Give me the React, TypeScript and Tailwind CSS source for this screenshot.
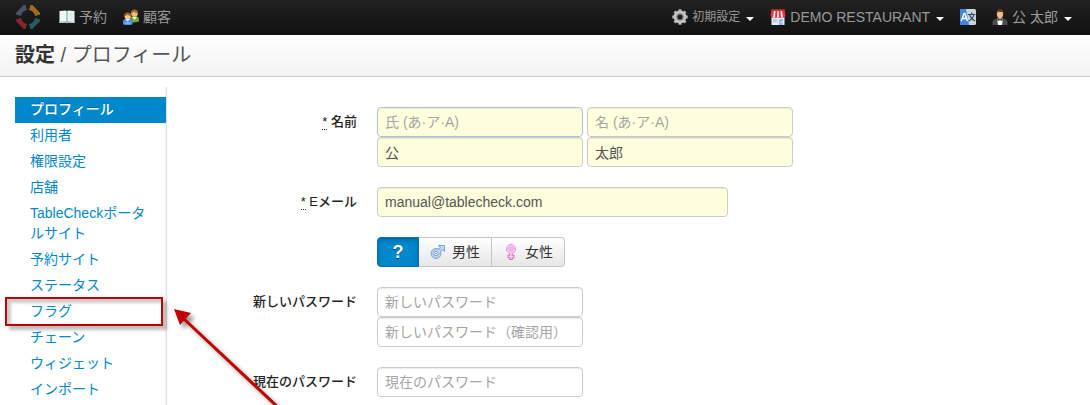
import React, { useState } from 'react';
import clsx from 'clsx';

const menuItems = [
  'プロフィール',
  '利用者',
  '権限設定',
  '店舗',
  'TableCheckポータルサイト',
  '予約サイト',
  'ステータス',
  'フラグ',
  'チェーン',
  'ウィジェット',
  'インポート',
];

const LogoIcon = () => (
  <svg width="26" height="26" viewBox="0 0 26 26" aria-hidden="true">
    <path d="M1 9L8.500 1H10.500L12 6A7.500 7.500 0 0 0 6 12L1 10.500Z" fill="#47536b" />
    <path d="M25 9L17.500 1H15.500L14 6A7.500 7.500 0 0 1 20 12L25 10.500Z" fill="#a36a26" />
    <path d="M1 17L8.500 25H10.500L12 20A7.500 7.500 0 0 1 6 14L1 15.500Z" fill="#85262b" />
    <path d="M25 17L17.500 25H15.500L14 20A7.500 7.500 0 0 0 20 14L25 15.500Z" fill="#245c66" />
  </svg>
);

const BookIcon = () => (
  <svg width="16" height="16" viewBox="0 0 16 16" aria-hidden="true">
    <path d="M.5 2L7 1.500L8 2.500L9 1.500L15.500 2V14L9 13.500L8 14.500L7 13.500L.5 14Z" fill="#eef8f8" />
    <path d="M.5 12.500L7.500 12V13.500L.5 14Z" fill="#b5cccd" />
    <path d="M15.500 12.500L8.500 12V13.500L15.500 14Z" fill="#b5cccd" />
    <path d="M7.500 2.500H8.500V14H7.500Z" fill="#76999c" />
    <path d="M10 3.500H14V11.500H10Z" fill="#d9eeee" />
  </svg>
);

const PeopleIcon = () => (
  <svg width="16" height="16" viewBox="0 0 16 16" aria-hidden="true">
    <path d="M7 14V9.500Q8 7 11.500 7Q15.500 7 16 10V12.500L14 13Z" fill="#75a832" />
    <path d="M9 8L11.500 11L14 8Z" fill="#e7f3cf" />
    <circle cx="11.500" cy="4.500" r="3.300" fill="#f1bd7b" />
    <path d="M8 4.500Q8 .5 11.500 .5Q15 .5 15 4.500Q12 4 11 2.500Q9.500 4 8 4.500Z" fill="#a06a2c" />
    <path d="M0 15V12Q.5 9.500 4.500 9.500Q9 9.500 9.500 12V15L8 16H1.500Z" fill="#4c8de0" />
    <path d="M2 13.500H7.500V14.500H2Z" fill="#a9cdf8" />
    <path d="M2.500 10L4.500 12.500L7 10Z" fill="#eef5ff" />
    <circle cx="4.700" cy="7" r="3.200" fill="#f6c889" />
    <path d="M1.300 7Q1.300 3.500 4.700 3.500Q8 3.500 8 7Q5.500 6.500 4.500 5.500Q3 7 1.300 7Z" fill="#96601f" />
  </svg>
);

const GearIcon = () => (
  <svg width="16" height="16" viewBox="0 0 16 16" aria-hidden="true">
    <g fill="#b9b9b9">
      <path d="M6.500 .3H9.500V15.700H6.500Z" />
      <path d="M.3 6.500H15.700V9.500H.3Z" />
      <path d="M6.500 .3H9.500V15.700H6.500Z" transform="rotate(45 8 8)" />
      <path d="M.3 6.500H15.700V9.500H.3Z" transform="rotate(45 8 8)" />
    </g>
    <circle cx="8" cy="8" r="6.400" fill="#c4c4c4" />
    <circle cx="8" cy="8" r="3.800" fill="#8b8b8b" />
    <circle cx="8" cy="8" r="2.500" fill="#202020" />
  </svg>
);

const ShopIcon = () => (
  <svg width="16" height="16" viewBox="0 0 16 16" aria-hidden="true">
    <path d="M1.500 8H14.500V16H1.500Z" fill="#e6eef7" />
    <path d="M3 10H7.500V14H3Z" fill="#a5c9ee" />
    <path d="M9 10H13V16H9Z" fill="#8fb9e6" />
    <path d="M4 13L7 10V14H4ZM10 14L13 11V14Z" fill="#c5ddf5" />
    <path d="M1.500 .5H14.500L15.500 7Q14.500 9.500 12.500 8.500Q11 9.500 9.500 8.500Q8 9.500 6.500 8.500Q5 9.500 3.500 8.500Q1.500 9.500 .5 7Z" fill="#e03a3e" />
    <path d="M4 2H5.500L5 8.500H3ZM7.300 2H8.700L9 8.500H7ZM10.500 2H12L13 8.500H11Z" fill="#ffe9e9" />
    <path d="M1.500 .5H14.500V2H1.500Z" fill="#cc2c35" />
  </svg>
);

const TranslateIcon = () => (
  <svg width="16" height="16" viewBox="0 0 16 16" aria-hidden="true">
    <rect width="16" height="16" rx="1.500" fill="#c8d3dc" />
    <path d="M1.500 0H6L9 16H1.500Q0 16 0 14.500V1.500Q0 0 1.500 0Z" fill="#3b86e8" />
    <path d="M1.300 12L4 4.500H4.800L7.500 12M2.500 9.500H6.500" fill="none" stroke="#fff" strokeWidth="1.500" />
    <path d="M8 5.500H15.300M11.700 3.500V5.500M8.500 12Q13 10 13.800 5.500M9.500 6Q11 10 15 12" fill="none" stroke="#34495e" strokeWidth="1.200" />
  </svg>
);

const WaiterIcon = () => (
  <svg width="16" height="16" viewBox="0 0 16 16" aria-hidden="true">
    <path d="M.5 16V13Q1 10 5 9.500H11Q15 10 15.500 13V16Z" fill="#4b4b4b" />
    <path d="M5 9.500H11L10 16H6Z" fill="#fff" />
    <path d="M5.500 9.500L8 10.500L10.500 9.500V12L8 11L5.500 12Z" fill="#161616" />
    <ellipse cx="8" cy="5.200" rx="3.100" ry="4" fill="#f0be88" />
    <path d="M4.500 5Q4 0 8 0Q12 0 11.500 5L10.500 3Q7.500 3 6 2.500Z" fill="#60391c" />
  </svg>
);

const MaleIcon = () => (
  <svg width="16" height="16" viewBox="0 0 16 16" fill="none" aria-hidden="true">
    <path d="M8.500 7.500L12 4" stroke="#7da3d8" strokeWidth="4" />
    <path d="M8.500 1.500H14.500V7.500Z" fill="#c2d8f4" stroke="#7da3d8" />
    <circle cx="6" cy="9.500" r="5" fill="#b8d1f1" stroke="#7da3d8" />
    <path d="M8.500 7.500L12.500 3.500" stroke="#c2d8f4" strokeWidth="2" />
    <circle cx="6" cy="9.500" r="2.200" fill="#eef4fc" stroke="#7da3d8" />
    <circle cx="6" cy="9.500" r=".8" fill="#5f89c4" />
  </svg>
);

const FemaleIcon = () => (
  <svg width="16" height="16" viewBox="0 0 16 16" fill="none" aria-hidden="true">
    <path d="M8 9V16M4.500 12.500H11.500" stroke="#d574c4" strokeWidth="3.500" />
    <circle cx="8" cy="5" r="4.500" fill="#f6cdef" stroke="#e196d6" />
    <path d="M8 9V15M5.500 12.500H10.500" stroke="#f6cdef" strokeWidth="1.500" />
    <circle cx="8" cy="5" r="2" fill="#fdf0fb" stroke="#e196d6" />
    <circle cx="8" cy="5" r=".8" fill="#d574c4" />
  </svg>
);

const Caret = () => (
  <span className="mt-1 h-0 w-0 border-x-4 border-t-4 border-x-transparent border-t-white" />
);

const inputBase =
  'h-[30px] rounded border px-[7px] pb-px text-sm text-[#555] shadow-[inset_0_1px_1px_rgba(0,0,0,0.075)] outline-none placeholder:text-[#a5a5a5]';

const Input: React.FC<React.InputHTMLAttributes<HTMLInputElement> & { required?: boolean; focused?: boolean; wide?: boolean }> = ({
  required,
  focused,
  wide,
  ...props
}) => (
  <input
    {...props}
    className={clsx(
      inputBase,
      required ? 'bg-[#ffffdd]' : 'bg-white',
      focused ? 'border-[#a9c4dc]' : 'border-[#ccc]',
      wide ? 'w-[351px]' : 'w-[206px]'
    )}
  />
);

const Field: React.FC<{ label?: string; htmlFor?: string; required?: boolean; children: React.ReactNode }> = ({
  label,
  htmlFor,
  required,
  children,
}) => (
  <div className="flex gap-5">
    <div className="w-[190px] shrink-0 pt-[5px] text-right text-[13px] leading-5">
      {label && (
        <label htmlFor={htmlFor} className="font-medium text-[#222]">
          {required && (
            <>
              <abbr title="必須" className="border-b border-dotted border-[#333] font-normal no-underline">*</abbr>{' '}
            </>
          )}
          {label}
        </label>
      )}
    </div>
    <div>{children}</div>
  </div>
);

const Navbar = () => (
  <nav className="flex h-[35px] items-center justify-between bg-gradient-to-b from-[#222] to-[#111] pr-[18px] pb-[2px] pl-[15px] text-sm text-[#999]">
    <div className="flex items-center">
      <a href="#home" aria-label="ホーム" className="mr-[18px]">
        <LogoIcon />
      </a>
      <a href="#reservations" className="mr-4 flex items-center gap-1">
        <BookIcon />
        予約
      </a>
      <a href="#customers" className="flex items-center gap-1">
        <PeopleIcon />
        顧客
      </a>
    </div>
    <div className="flex items-center">
      <button className="mr-4 flex items-center gap-1 text-xs">
        <GearIcon />
        <span className="mr-[2px]">初期設定</span>
        <Caret />
      </button>
      <button className="mr-4 flex items-center gap-1">
        <ShopIcon />
        <span className="mr-[2px]">DEMO RESTAURANT</span>
        <Caret />
      </button>
      <button aria-label="言語" className="mr-4">
        <TranslateIcon />
      </button>
      <button className="flex items-center gap-1">
        <WaiterIcon />
        <span className="mr-[2px]">公 太郎</span>
        <Caret />
      </button>
    </div>
  </nav>
);

// Red frame and arrow pointing out the flag menu entry
const Callout = () => (
  <>
    <span className="pointer-events-none absolute -top-[2px] -right-[3px] -bottom-px -left-[10px] mr-[6px] border-2 border-[#c00000] shadow-[4px_4px_3px_rgba(0,0,0,0.25),inset_4px_4px_3px_rgba(0,0,0,0.2)]" />
    <svg
      className="pointer-events-none absolute top-[8px] left-[157px] drop-shadow-[4px_4px_2px_rgba(0,0,0,0.4)]"
      width="110"
      height="110"
      viewBox="0 0 110 110"
      aria-hidden="true"
    >
      <path d="M12 12L110 104" stroke="#c00000" strokeWidth="3" />
      <path d="M2 2L19 6L8 18Z" fill="#c00000" />
    </svg>
  </>
);

const Sidebar = () => (
  <aside className="mt-[10px] ml-[15px] w-[152px] shrink-0 border-r border-[#ddd] pt-[10px] shadow-[inset_-3px_0_3px_-2px_rgba(0,0,0,0.06)]">
    <ul className="text-sm leading-5">
      {menuItems.map((item, i) => (
        <li key={item} className="relative">
          <a
            href={`#menu-${i}`}
            className={clsx(
              'block px-[15px] pt-[2px] pb-1',
              i === 0 ? 'bg-[#0088cc] font-medium text-white [text-shadow:0_-1px_0_rgba(0,0,0,0.2)]' : 'text-[#0088cc]'
            )}
          >
            {item}
          </a>
          {item === 'フラグ' && <Callout />}
        </li>
      ))}
    </ul>
  </aside>
);

const App: React.FC = () => {
  const [gender, setGender] = useState<'unknown' | 'male' | 'female'>('unknown');

  const genderClass = (value: string) =>
    clsx(
      'flex h-[30px] items-center justify-center gap-[6px] border text-sm',
      gender === value
        ? 'border-[#0074ad] bg-[#0088cc] text-white shadow-[inset_0_2px_4px_rgba(0,0,0,0.25)]'
        : 'border-[#c5c5c5] bg-gradient-to-b from-white to-[#e6e6e6] text-[#333]'
    );

  return (
    <div className="flex min-h-screen flex-col overflow-hidden bg-white font-['Liberation_Sans','Noto_Sans_CJK_JP',sans-serif]">
      <Navbar />
      <header className="flex h-[42px] items-center border-b border-[#ccc] bg-gradient-to-b from-white to-[#f2f2f2] px-[15px] pb-px">
        <h1 className="text-xl leading-5 text-[#555]">
          <strong className="font-bold text-[#333]">設定</strong> / プロフィール
        </h1>
      </header>
      <div className="flex flex-1">
        <Sidebar />
        <main className="flex-1 pt-[30px]">
          <form className="flex flex-col gap-5" onSubmit={e => e.preventDefault()}>
            <Field label="名前" htmlFor="last-kana" required>
              <div className="grid grid-cols-[206px_206px] gap-x-1">
                <Input id="last-kana" aria-label="氏 (よみ)" placeholder="氏 (あ·ア·A)" required focused />
                <Input aria-label="名 (よみ)" placeholder="名 (あ·ア·A)" required />
                <Input aria-label="氏" defaultValue="公" required />
                <Input aria-label="名" defaultValue="太郎" required />
              </div>
            </Field>
            <Field label="Eメール" htmlFor="email" required>
              <Input id="email" type="email" defaultValue="manual@tablecheck.com" required wide />
            </Field>
            <Field>
              <div className="flex" role="group" aria-label="性別">
                <button type="button" onClick={() => setGender('unknown')} className={clsx(genderClass('unknown'), 'w-[42px] rounded-l')}>
                  <span className="text-lg font-bold [text-shadow:0_1px_1px_rgba(0,0,0,0.5)]">?</span>
                </button>
                <button type="button" onClick={() => setGender('male')} className={clsx(genderClass('male'), 'w-[73px] border-l-0')}>
                  <MaleIcon />
                  男性
                </button>
                <button type="button" onClick={() => setGender('female')} className={clsx(genderClass('female'), 'w-[73px] rounded-r border-l-0')}>
                  <FemaleIcon />
                  女性
                </button>
              </div>
            </Field>
            <Field label="新しいパスワード" htmlFor="new-password">
              <div className="grid">
                <Input id="new-password" type="password" placeholder="新しいパスワード" />
                <Input type="password" aria-label="新しいパスワード（確認用）" placeholder="新しいパスワード（確認用）" />
              </div>
            </Field>
            <Field label="現在のパスワード" htmlFor="current-password">
              <Input id="current-password" type="password" placeholder="現在のパスワード" />
            </Field>
          </form>
        </main>
      </div>
    </div>
  );
};

export default App;
